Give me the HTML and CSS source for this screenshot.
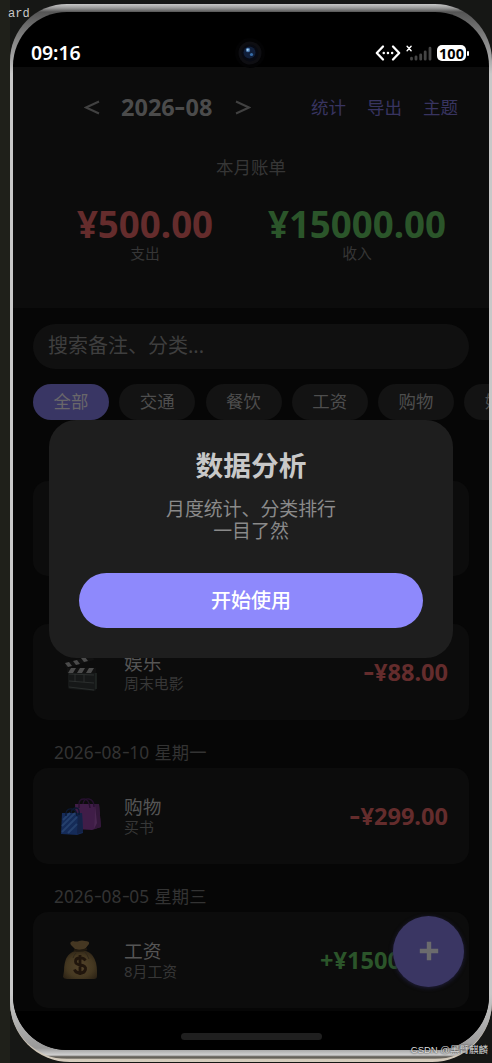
FILE: index.html
```html
<!DOCTYPE html>
<html lang="zh-CN">
<head>
<meta charset="utf-8">
<title>记账</title>
<link rel="stylesheet" href="styles.css">
</head>
<body>
<div class="desktop">
  <span class="editor-text">ard</span>
  <div class="phone">
    <div class="rim">
      <div class="screen">
        <div class="status">
          <span class="clock">09:16</span>
          <div class="status-icons">
            <svg class="net" viewBox="0 0 26 18" width="26" height="18" fill="none" stroke="#fff" stroke-width="2.3" stroke-linecap="round" stroke-linejoin="round"><path d="M8 2.500 1.800 9 8 15.500M18 2.500l6.200 6.500L18 15.500"/><path d="M8.700 9h.1M12.900 9h.1M17.100 9h.1" stroke-width="2.400"/></svg>
            <svg class="signal" viewBox="0 0 26 18" width="26" height="18" fill="none" stroke-linecap="round"><path d="M1.100 2.300l4 4.500M5.100 2.300l-4 4.500" stroke="#fff" stroke-width="1.400"/><path d="M5.500 14.200v1M10 12.800v2.400M14.700 10.800v4.400M19.200 7.800v7.400M24 4.200v11" stroke="#444" stroke-width="2.800"/></svg>
            <span class="battery">100</span><i class="battery-tip"></i>
          </div>
          <svg class="camera" viewBox="0 0 32 32" width="32" height="32"><circle cx="16" cy="16" r="15" fill="#030304"/><circle cx="16" cy="16" r="11.500" fill="#0e0e12"/><circle cx="16" cy="16" r="8.500" fill="#080a12"/><circle cx="15.500" cy="15.500" r="6" fill="#111f3a"/><circle cx="14" cy="13" r="2.200" fill="#4a78ad"/><circle cx="13.700" cy="12.800" r="1.100" fill="#a9d5f4"/><circle cx="17.500" cy="17.500" r="1.600" fill="#376da8"/></svg>
        </div>

        <header class="summary">
          <div class="toolbar">
            <div class="month">
              <svg width="16" height="15" viewBox="0 0 16 15" fill="none" stroke="#414141" stroke-width="2"><path d="M15 1.500 2 7.500l13 6"/></svg>
              <b>2026<i class="dash">-</i>08</b>
              <svg width="16" height="15" viewBox="0 0 16 15" fill="none" stroke="#414141" stroke-width="2"><path d="m1 1.500 13 6-13 6"/></svg>
            </div>
            <nav class="links"><span>统计</span><span>导出</span><span>主题</span></nav>
          </div>
          <div class="bill-title">本月账单</div>
          <div class="totals">
            <div class="total"><b class="expense">¥500.00</b><span>支出</span></div>
            <div class="total"><b class="income">¥15000.00</b><span>收入</span></div>
          </div>
        </header>

        <main class="list">
          <div class="search">搜索备注、分类...</div>
          <div class="chips">
            <span class="chip active">全部</span><span class="chip">交通</span><span class="chip">餐饮</span><span class="chip">工资</span><span class="chip">购物</span><span class="chip">娱乐</span>
          </div>
          <div class="date first"></div>
          <div class="card"></div>
          <div class="date"></div>
          <div class="card">
            <svg class="icon" viewBox="0 0 40 40" width="40" height="40"><g transform="translate(0 1)"><path d="M7 19h28v17q0 2-2 2L9 36q-2 0-2-2z" fill="#161818"/><path d="M4 10 32 2l1 5L5 15zM6 15h29v5H6z" fill="#111"/><path d="m4 10 4-1 3 4-4 1zm8-2 4-1 3 4-4 1zm8-3 4-1 3 4-4 1zM10 15h5l-3 5H7zm9 0h5l-3 5h-5zm9 0h5l-3 5h-5z" fill="#4b4b4b"/><path d="M8 21l25 1M8 28l25 2M8 34l25 3M14 21v8M23 22v7" stroke="#303432" stroke-width=".8" fill="none"/><path d="M35 20v16" stroke="#222725" stroke-width="1.500"/></g></svg>
            <div class="info"><strong>娱乐</strong><span>周末电影</span></div>
            <b class="amount expense"><i class="dash">-</i>¥88.00</b>
          </div>
          <div class="date">2026<i class="dash">-</i>08<i class="dash">-</i>10 <span class="weekday">星期一</span></div>
          <div class="card">
            <svg class="icon" viewBox="0 0 40 40" width="40" height="40"><path d="M14 8h24l2 23-9 3-16-1z" fill="#401d48"/><path d="m34 8 4 0 2 23-7 2z" fill="#34183b"/><path d="m34 9-1 24 3-6z" fill="#4a2751"/><path d="M18 12V8q0-5 5-5t6 9M22 8q1-6 6-5t5 8" fill="none" stroke="#26102f" stroke-width="1.300"/><path d="M1 17h20l1 20-6 2-16-1z" fill="#152b58"/><path d="m17 17 4 0 1 19-6 2z" fill="#142347"/><path d="m2 24 7-7M1 30l13-13M1 36l15-15M7 37l9-9" stroke="#25406c" stroke-width="2"/><path d="M5 20v-3q1-5 6-4t5 7M10 17q1-5 5-5t3 7" fill="none" stroke="#0c1830" stroke-width="1.300"/></svg>
            <div class="info"><strong>购物</strong><span>买书</span></div>
            <b class="amount expense"><i class="dash">-</i>¥299.00</b>
          </div>
          <div class="date">2026<i class="dash">-</i>08<i class="dash">-</i>05 <span class="weekday">星期三</span></div>
          <div class="card">
            <svg class="icon" viewBox="0 0 40 40" width="40" height="40"><defs><radialGradient id="bag" cx=".5" cy=".55" r=".65"><stop offset="0" stop-color="#54442b"/><stop offset=".6" stop-color="#453821"/><stop offset="1" stop-color="#292014"/></radialGradient></defs><path d="M14 11Q3 14 3 31L2 37q1 2 4 2h27q3 0 3-3Q37 15 25 11z" fill="url(#bag)"/><path d="M14 9 10 5q-2-3 2-4 4 1 6 0 3-1 6 0 5 0 4 3l-4 5q-5 2-10 0z" fill="#453722"/><path d="M13 10q6 2 13-1" stroke="#211a10" stroke-width="2" fill="none"/><path d="M15 13q-2 2-3 5M24 12q2 2 4 7" stroke="#30271a" fill="none"/><path d="M24.500 20.500q-2-3-6-2.500-4 0-4 3.500 0 3 5 3.500 6 1 5 4.500-1 3.500-5 3.500-5 0-6-3.500M19 15v20" stroke="#20150c" stroke-width="2.800" fill="none"/></svg>
            <div class="info"><strong>工资</strong><span>8月工资</span></div>
            <b class="amount income">+¥15000.00</b>
          </div>
          <div class="fab"><svg width="20" height="20" viewBox="0 0 20 20"><path d="M10 .8v18.400M.8 10h18.400" stroke="#6b6b6d" stroke-width="4.400"/></svg></div>
        </main>
        <footer class="home"><i></i></footer>

        <section class="dialog">
          <h2>数据分析</h2>
          <p>月度统计、分类排行<br>一目了然</p>
          <div class="start">开始使用</div>
        </section>
      </div>
    </div>
  </div>
  <span class="watermark">CSDN @黑臂麒麟</span>
</div>
</body>
</html>
```
FILE: styles.css
```css
* { box-sizing: border-box; }
body { margin: 0; background: #1f201a; font-family: "Noto Sans", "Noto Sans CJK SC", sans-serif; }
.desktop {
  position: relative; width: 492px; height: 1063px; overflow: hidden;
  padding: 2px 0 1px 10px;
  background: linear-gradient(90deg, #1f201a 10px, #161715 10px);
}
.editor-text {
  position: absolute; left: 8px; top: 6px; font: 12px/16px "Liberation Mono", monospace; color: #c8c8c8;
}
.phone {
  position: relative; width: 482px; height: 1060px; padding: 2px 0 3px; border-radius: 60px;
  background: linear-gradient(#151515 0, #333 50px, #aaa 120px, #c4c4c4 900px, #b6ad9f 1010px, #d5ccbd 1060px);
}
.rim {
  height: 1055px; padding: 8px 3px 9px; border-radius: 57px;
  background: linear-gradient(#c8c8c8 0, #999 4px, #555 8px, #999 48px, #c8c8c8 70px, #c8c8c8 990px, #999 1044px, #d0d0d0 1051px, #55514a 1053px, #9a9489 1055px);
}
.screen {
  position: relative; height: 1038px; border-radius: 54px; overflow: hidden;
  background: #000; display: flex; flex-direction: column;
}
.status {
  position: relative; height: 55px; flex: none; display: flex; justify-content: space-between;
  padding: 28px 20px 0 18px; color: #fff;
}
.clock { font-size: 19.500px; font-weight: 600; line-height: 26px; letter-spacing: -.1px; }
.status-icons { display: flex; align-items: center; height: 26px; }
.signal { margin-left: 5px; }
.battery {
  margin-left: 5px; width: 29px; height: 16px; border-radius: 5px; background: #fff; color: #000;
  font-size: 14.500px; font-weight: 700; line-height: 16px; text-align: center;
}
.battery-tip { width: 2px; height: 5px; margin-left: 1px; border-radius: 1px; background: #fff; }
.camera { position: absolute; left: 221px; top: 25px; z-index: 2; }
.dash { display: inline-block; font-style: normal; margin: 0 .07em; transform: translateY(-.04em) scaleX(1.4); }

.summary { height: 241px; flex: none; background: #0c0c0c; padding: 25px 26px 0; }
.toolbar { display: flex; justify-content: space-between; align-items: center; height: 30px; padding: 0 5px 0 45px; }
.month { display: flex; align-items: center; gap: 21px; color: #4b4b4b; }
.month b { width: 93px; font-size: 23.500px; line-height: 30px; white-space: nowrap; }
.links { display: flex; gap: 21px; font-size: 17.500px; line-height: 28px; color: #383460; }
.bill-title { margin-top: 32px; text-align: center; font-size: 17.500px; line-height: 26px; color: #363636; }
.totals { display: grid; grid-template-columns: 1fr 1fr; margin-top: 22px; }
.total { display: flex; flex-direction: column; align-items: center; white-space: nowrap; }
.total b { font-size: 36.700px; line-height: 44px; }
.total span { font-size: 14.800px; line-height: 18px; margin-top: -2px; color: #363636; }
.expense { color: #642c2c; }
.income { color: #2b552a; }

.list { position: relative; height: 703px; flex: none; background: #060606; padding: 15.500px 20px 0; overflow: hidden; }
.search {
  height: 45.500px; border-radius: 23px; background: #101010; padding-left: 15px;
  font-size: 20px; line-height: 44px; color: #3e3e3e;
}
.chips { display: flex; gap: 10.250px; margin: 15px -20px 0 0; overflow: hidden; }
.chip {
  flex: 0 0 76px; height: 35.500px; border-radius: 18px; background: #131313; color: #4e4e4e;
  font-size: 17.400px; line-height: 35px; text-align: center;
}
.chip.active { background: #393664; color: #69676a; }
.date { height: 48.700px; padding: 18px 0 0 21px; font-size: 17.300px; line-height: 30px; color: #333; }
.date.first { height: 61px; }
.weekday { margin-left: 1px; }
.card { display: flex; align-items: center; height: 95.300px; padding: 0 21px 0 28px; border-radius: 15px; background: #0c0c0c; }
.icon { flex: none; }
.info { margin-left: 23px; display: flex; flex-direction: column; }
.info strong { font-size: 18.700px; font-weight: 400; line-height: 22px; color: #555; }
.info span { font-size: 14.900px; line-height: 18px; color: #373737; }
.amount { margin-left: auto; font-size: 23.600px; line-height: 30px; }
.fab {
  position: absolute; left: 380px; top: 608px; width: 71px; height: 71px; border-radius: 50%;
  display: flex; align-items: center; justify-content: center; background: #3a3663;
  box-shadow: 0 1px 4px #211f3e;
}
.fab svg { margin-bottom: 2px; }
.home { height: 39px; flex: none; display: flex; justify-content: center; padding-top: 22px; background: #000; }
.home i { width: 141px; height: 7px; border-radius: 4px; background: #1f1f1f; }

.dialog {
  position: absolute; left: 36px; top: 408px; width: 404px; height: 238px; padding: 27px 30px 0;
  border-radius: 27px; background: #1e1e1e; text-align: center;
}
.dialog h2 { margin: 0; font-size: 27.700px; line-height: 36px; font-weight: 700; color: #c8c8c8; }
.dialog p { margin: 15px 0 0; font-size: 18.900px; line-height: 22px; color: #8a8a8a; }
.start {
  margin-top: 31px; height: 55px; border-radius: 28px; background: #8e89fc; color: #fff;
  font-size: 20px; font-weight: 500; line-height: 55px;
}
.watermark {
  position: absolute; right: 4px; top: 1042px; font: 9.500px/16px "Liberation Sans", "Noto Sans CJK SC", sans-serif;
  color: #dcdcdc; text-shadow: 0 0 2px #000; white-space: nowrap;
}
```
